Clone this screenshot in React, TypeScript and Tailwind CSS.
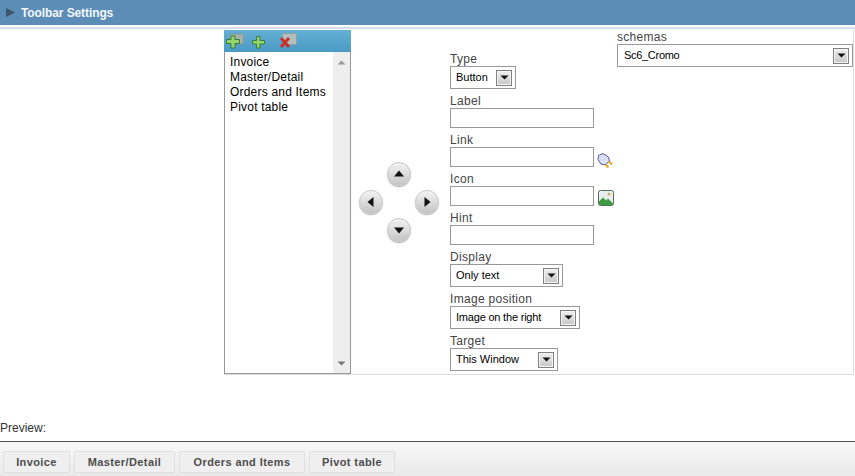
import React from "react";

const font = "font-['Liberation_Sans',Arial,sans-serif]";
const labelCls = "h-[14px] text-[12px] leading-[14px] tracking-[0.3px] text-[#444]";

function DropArrow() {
  return (
    <span className="flex h-[16px] w-[16px] items-center justify-center border border-[#808080] bg-gradient-to-b from-[#efefef] to-[#c6c6c6] shadow-[inset_0_0_0_1px_#f4f4f4]">
      <svg width="9" height="5" viewBox="0 0 9 5">
        <path d="M0.500 0.500h8L4.500 4.500z" fill="#111" />
      </svg>
    </span>
  );
}

function Select({ value, className, textClass = "" }: { value: string; className: string; textClass?: string }) {
  return (
    <div className={`flex h-[23px] shrink-0 items-center justify-between border border-[#999] bg-white pl-[5px] pr-[3px] text-[11px] text-black ${className}`}>
      <span className={textClass}>{value}</span>
      <DropArrow />
    </div>
  );
}

function Field({ label, children }: { label: string; children: React.ReactNode }) {
  return (
    <div className="flex h-[39px] flex-col">
      <div className={labelCls}>{label}</div>
      <div className="flex items-start">{children}</div>
    </div>
  );
}

function SelectField({ label, children }: { label: string; children: React.ReactNode }) {
  return (
    <div className="flex h-[42px] flex-col">
      <div className={labelCls}>{label}</div>
      {children}
    </div>
  );
}

function TextBox() {
  return <div className="h-[20px] w-[144px] border border-[#999] bg-white" />;
}

function MoveButton({ d }: { d: string }) {
  return (
    <div className="flex h-[24px] w-[24px] items-center justify-center rounded-full border border-[#c8c8c8] bg-gradient-to-b from-[#f4f4f4] to-[#c4c4c4] shadow-[0_1px_1px_#aaa]">
      <svg width="12" height="12" viewBox="0 0 12 12">
        <path d={d} fill="#111" />
      </svg>
    </div>
  );
}

function AddRowIcon() {
  return (
    <svg width="18" height="16" viewBox="0 0 18 16" className="block">
      <rect x="4" y="1" width="13.500" height="10" rx="1" fill="#a3b0ae" stroke="#7d8c8c" strokeWidth="0.600" />
      <path d="M0.500 6.500h4.500V3h4v3.500h4.500v4H9V15H5v-4.500H0.500z" fill="#93d46e" stroke="#3a7d3a" />
    </svg>
  );
}

function AddIcon() {
  return (
    <svg width="13" height="13" viewBox="0 0 13 13" className="block">
      <path d="M0.500 4.500h4V0.500h3.500v4h4.500v3.500H8v4H4.500v-4h-4z" fill="#93d46e" stroke="#3a7d3a" />
    </svg>
  );
}

function DeleteIcon() {
  return (
    <svg width="18" height="16" viewBox="0 0 18 16" className="block">
      <rect x="3.500" y="0.500" width="14" height="11" rx="1" fill="#b5bdbd" stroke="#8c9898" strokeWidth="0.600" />
      <path d="M2 5l8 9M10 5l-8 9" stroke="#c8322a" strokeWidth="3" />
    </svg>
  );
}

function PlugIcon() {
  return (
    <svg width="17" height="17" viewBox="0 0 17 17" className="block">
      <path d="M1.500 3.500L6 1.500l5.500 3.500 1 4-4.500 4-4-1-3-4.500z" fill="#dcdff6" stroke="#5058a4" />
      <path d="M8.500 12.500l3 3M12 9.500l3 3" stroke="#e6ab1c" strokeWidth="2.200" />
    </svg>
  );
}

function ImageIcon() {
  return (
    <svg width="16" height="16" viewBox="0 0 16 16" className="block">
      <rect x="0.500" y="0.500" width="15" height="15" rx="2" fill="#e8eeee" stroke="#55705a" />
      <path d="M1 15v-3.500l4-4 3 3 2-2 5 5V15z" fill="#3f9a44" />
      <circle cx="11" cy="4" r="1.500" fill="#c8b070" />
    </svg>
  );
}

function PreviewButton({ label, width }: { label: string; width: string }) {
  return (
    <div className={`flex h-[22px] items-center justify-center rounded-[2px] border border-[#e0e0e0] bg-[#efefef] text-[11px] font-bold tracking-[0.4px] text-[#4d4d4d] ${width}`}>
      {label}
    </div>
  );
}

export default function App() {
  return (
    <div className={`flex h-[476px] w-[855px] flex-col overflow-hidden bg-white ${font}`}>
      <div className="flex h-[25px] shrink-0 items-center gap-[6px] bg-[#5b8db7] pl-[6px]">
        <svg width="9" height="9" viewBox="0 0 9 9">
          <path d="M0 0L9 4.500L0 9z" fill="#3f556b" />
        </svg>
        <span className="text-[12px] font-bold tracking-[-0.1px] text-[#f2f6fa]">Toolbar Settings</span>
      </div>
      <div className="mt-[2px] h-[2px] shrink-0 bg-[#d3dee6]" />

      <div className="mt-[1px] flex h-[345px] shrink-0">
        <div className="w-[224px] shrink-0" />
        <div className="flex h-[345px] w-[630px] border-r border-b border-[#ddd]">
          <div className="flex w-[127px] shrink-0 flex-col">
            <div className="flex h-[22px] items-start bg-gradient-to-b from-[#63b0d4] to-[#4a9ac4] pl-[2px] pt-[3px]">
              <AddRowIcon />
              <span className="ml-[8px] mt-[3px]"><AddIcon /></span>
              <span className="ml-[14px]"><DeleteIcon /></span>
            </div>
            <div className="flex h-[322px] border-x border-b border-[#999] bg-white">
              <div className="flex-1 pl-[5px] pt-[3px] text-[12px] leading-[15px] tracking-[0.2px] text-black">
                <div>Invoice</div>
                <div>Master/Detail</div>
                <div>Orders and Items</div>
                <div>Pivot table</div>
              </div>
              <div className="flex w-[17px] flex-col items-center justify-between bg-[#eee] pb-[7px] pt-[8px]">
                <svg width="9" height="5" viewBox="0 0 9 5"><path d="M4.500 0.500L8.500 4.500H0.500z" fill="#999" /></svg>
                <svg width="9" height="5" viewBox="0 0 9 5"><path d="M0.500 0.500h8L4.500 4.500z" fill="#777" /></svg>
              </div>
            </div>
          </div>

          <div className="flex w-[99px] shrink-0 items-center justify-center pr-[4px]">
            <div className="grid grid-cols-[28px_28px_28px] grid-rows-[28px_28px_28px] place-items-center">
              <div />
              <MoveButton d="M6 2.500L11 8.500H1z" />
              <div />
              <MoveButton d="M2.500 6L8.500 1v10z" />
              <div />
              <MoveButton d="M9.500 6L3.500 1v10z" />
              <div />
              <MoveButton d="M6 9.500L1 3.500h10z" />
              <div />
            </div>
          </div>

          <div className="w-[167px] shrink-0 pt-[22px]">
            <SelectField label="Type"><Select value="Button" className="w-[66px]" /></SelectField>
            <Field label="Label"><TextBox /></Field>
            <Field label="Link">
              <TextBox />
              <span className="ml-[3px] mt-[5px]"><PlugIcon /></span>
            </Field>
            <Field label="Icon">
              <TextBox />
              <span className="ml-[4px] mt-[4px]"><ImageIcon /></span>
            </Field>
            <Field label="Hint"><TextBox /></Field>
            <SelectField label="Display"><Select value="Only text" className="w-[113px]" /></SelectField>
            <SelectField label="Image position"><Select value="Image on the right" className="w-[130px]" textClass="tracking-[-0.2px]" /></SelectField>
            <SelectField label="Target"><Select value="This Window" className="w-[108px]" /></SelectField>
          </div>

          <div className="flex-1">
            <div className={labelCls}>schemas</div>
            <Select value="Sc6_Cromo" className="w-[236px]" textClass="ml-[1px] tracking-[-0.3px]" />
          </div>
        </div>
      </div>

      <div className="mt-[46px] h-[15px] shrink-0 text-[12px] leading-[15px] text-[#333]">Preview:</div>
      <div className="mt-[5px] h-[1px] shrink-0 bg-[#555]" />
      <div className="flex h-[34px] shrink-0 gap-[4px] bg-gradient-to-b from-[#f8f8f8] to-[#e9e9e9] pl-[3px] pt-[9px]">
        <PreviewButton label="Invoice" width="w-[67px]" />
        <PreviewButton label="Master/Detail" width="w-[101px]" />
        <PreviewButton label="Orders and Items" width="w-[126px]" />
        <PreviewButton label="Pivot table" width="w-[86px]" />
      </div>
    </div>
  );
}
